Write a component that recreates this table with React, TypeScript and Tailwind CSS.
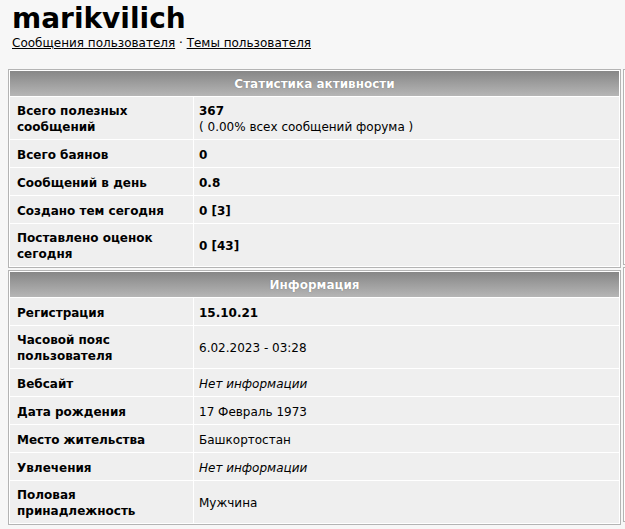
import React from "react"

type Row = { label: string; value: React.ReactNode }

const stats: Row[] = [
  {
    label: "Всего полезных сообщений",
    value: (
      <>
        <b>367</b>
        <br />( 0.00% всех сообщений форума )
      </>
    ),
  },
  { label: "Всего баянов", value: <b>0</b> },
  { label: "Сообщений в день", value: <b>0.8</b> },
  { label: "Создано тем сегодня", value: <b>0 [3]</b> },
  { label: "Поставлено оценок сегодня", value: <b>0 [43]</b> },
]

const info: Row[] = [
  { label: "Регистрация", value: <b>15.10.21</b> },
  { label: "Часовой пояс пользователя", value: "6.02.2023 - 03:28" },
  { label: "Вебсайт", value: <i>Нет информации</i> },
  { label: "Дата рождения", value: "17 Февраль 1973" },
  { label: "Место жительства", value: "Башкортостан" },
  { label: "Увлечения", value: <i>Нет информации</i> },
  { label: "Половая принадлежность", value: "Мужчина" },
]

function Block({ title, rows }: { title: string; rows: Row[] }) {
  return (
    <div className="border border-[#b4b4b4] bg-white p-px flex flex-col gap-px">
      {/* header */}
      <div className="h-[25px] flex items-center justify-center bg-gradient-to-b from-[#878787] to-[#b6b6b6] text-white font-bold [text-shadow:0_0_1px_#666]">
        {title}
      </div>
      {rows.map((r, i) => (
        <div key={i} className="flex gap-px">
          <div className="w-[183px] shrink-0 bg-[#efefef] min-h-[27px] flex items-center px-[7px] pt-[6px] pb-[4px] font-bold">
            {r.label}
          </div>
          <div className="flex-1 bg-[#efefef] min-h-[27px] flex items-center px-[5px] pt-[6px] pb-[4px]">
            <div>{r.value}</div>
          </div>
        </div>
      ))}
    </div>
  )
}

// neighbouring column, only its left edge shows in the shot
function SideBlock({ rows }: { rows: number[] }) {
  return (
    <div className="border border-[#b4b4b4] bg-white p-px flex flex-col gap-px">
      <div className="h-[25px] bg-gradient-to-b from-[#878787] to-[#b6b6b6]" />
      {rows.map((h, i) => (
        <div key={i} className="bg-[#efefef]" style={{ height: h }} />
      ))}
    </div>
  )
}

export default function App() {
  return (
    <div className="w-[625px] h-[529px] overflow-hidden bg-[#f7f7f7] text-black text-[12px] leading-[16px] font-['DejaVu_Sans',Verdana,sans-serif]">
      <div className="px-2">
        <h1 className="pl-1 pt-[2px] text-[28px] leading-[34px] font-bold">marikvilich</h1>
        <div className="pl-1 mt-[-1px]">
          <a href="#" className="underline">Сообщения пользователя</a>
          {" · "}
          <a href="#" className="underline">Темы пользователя</a>
        </div>
        <div className="mt-[18px] flex gap-[2px]">
          <div className="w-[613px] shrink-0 flex flex-col gap-[2px]">
            <Block title="Статистика активности" rows={stats} />
            <Block title="Информация" rows={info} />
          </div>
          <div className="w-[200px] shrink-0 flex flex-col gap-[2px]">
            <SideBlock rows={[27, 27, 27, 27, 27, 26]} />
            <SideBlock rows={[27, 42, 27, 27, 27, 27, 42]} />
          </div>
        </div>
      </div>
    </div>
  )
}
